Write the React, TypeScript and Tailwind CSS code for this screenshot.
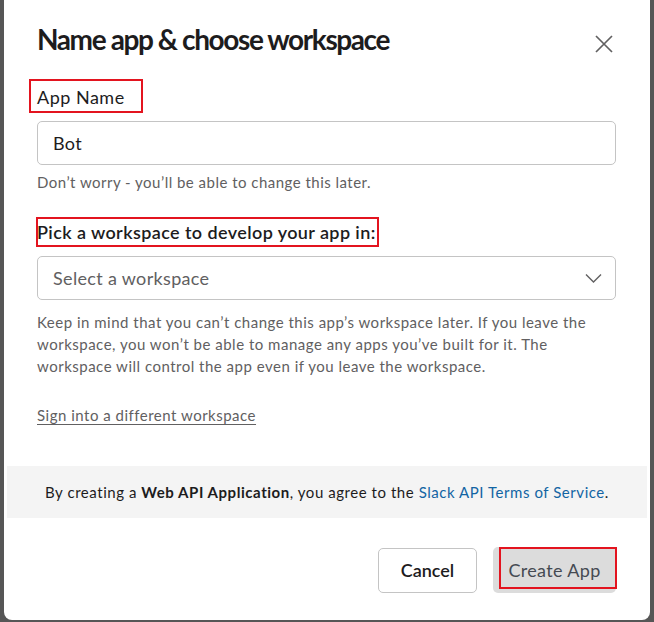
import { useState } from "react";

const FONT = { fontFamily: "Lato, 'Noto Sans', sans-serif" };

// red annotation rectangle drawn over a piece of the page
function Mark({ className }: { className: string }) {
  return (
    <span
      className={`pointer-events-none absolute border-2 border-[#e3141f] ${className}`}
    />
  );
}

export default function App() {
  const [name, setName] = useState("Bot");

  return (
    <div className="h-screen bg-[#565656] px-[4px]" style={FONT}>
      <div className="flex h-[620px] flex-col rounded-b-[8px] bg-white">
        {/* Header */}
        <div className="flex items-start justify-between pl-[33px] pr-[34px] pt-[22px]">
          <h1 className="text-[28px] font-bold leading-[34px] tracking-[-1.4px] text-[#1d1c1d]">
            Name app &amp; choose workspace
          </h1>
          <button type="button" aria-label="Close" className="mt-[10px] text-[#616061]">
            <svg width="24" height="24" viewBox="0 0 24 24" fill="none">
              <path d="M4 4l16 16M20 4L4 20" stroke="currentColor" strokeWidth="1.7" />
            </svg>
          </button>
        </div>

        <div className="flex flex-col pl-[33px] pr-[34px]">
          <label className="relative mt-[29px] self-start text-[18px] leading-[24px] tracking-[0.5px] text-[#1d1c1d]">
            App Name
            <Mark className="-left-[8px] -top-[6px] -bottom-[4px] w-[114px]" />
          </label>

          <input
            value={name}
            onChange={(e) => setName(e.target.value)}
            className="mt-[12px] h-[44px] rounded-[5px] border border-[#c4c4c4] px-[15px] text-[18px] tracking-[0.3px] text-[#1d1c1d] outline-none"
          />

          <p className="mt-[6px] text-[15px] leading-[22px] tracking-[0.48px] text-[#616061]">
            Don’t worry - you’ll be able to change this later.
          </p>

          <label className="relative mt-[27px] self-start text-[18px] font-semibold leading-[24px] tracking-[0.4px] text-[#1d1c1d]">
            Pick a workspace to develop your app in:
            <Mark className="-left-[1px] -right-[3px] -top-[3px] -bottom-[3px]" />
          </label>

          <button
            type="button"
            className="mt-[12px] flex h-[44px] items-center justify-between rounded-[5px] border border-[#c4c4c4] pl-[15px] pr-[13px] text-[18px] tracking-[0.33px] text-[#616061]"
          >
            <span>Select a workspace</span>
            <svg width="17" height="11" viewBox="0 0 17 11" fill="none">
              <path d="M1 1.5l7.5 7.5L16 1.5" stroke="currentColor" strokeWidth="1.4" />
            </svg>
          </button>

          <p className="mt-[11px] text-[15px] leading-[22px] tracking-[0.5px] text-[#616061]">
            Keep in mind that you can’t change this app’s workspace later. If you leave the
            workspace, you won’t be able to manage any apps you’ve built for it. The
            workspace will control the app even if you leave the workspace.
          </p>

          <a
            href="#"
            className="mt-[27px] self-start text-[15px] leading-[22px] tracking-[0.5px] text-[#616061] underline underline-offset-[3px]"
          >
            Sign into a different workspace
          </a>
        </div>

        {/* Terms band */}
        <div className="mx-[3px] mt-[40px] flex h-[52px] items-center justify-center bg-[#f4f4f4] text-[15px] leading-[22px] tracking-[0.55px] text-[#1d1c1d]">
          <p>
            By creating a <b className="font-bold">Web API Application</b>, you agree to the{" "}
            <a href="#" className="text-[#1264a3]">
              Slack API Terms of Service
            </a>
            .
          </p>
        </div>

        {/* Actions */}
        <div className="mt-[30px] flex justify-end gap-[16px] pr-[34px]">
          <button
            type="button"
            className="h-[45px] w-[99px] rounded-[5px] border border-[#c4c4c4] bg-white text-[18px] font-semibold text-[#1d1c1d]"
          >
            Cancel
          </button>
          <button
            type="button"
            className="relative h-[46px] w-[123px] -translate-y-[1px] rounded-[5px] bg-[#dcdcdc] text-[18px] tracking-[0.35px] text-[#454a52]"
          >
            Create App
            <Mark className="left-[6px] -right-[1px] top-0 bottom-[4px]" />
          </button>
        </div>
      </div>
    </div>
  );
}
